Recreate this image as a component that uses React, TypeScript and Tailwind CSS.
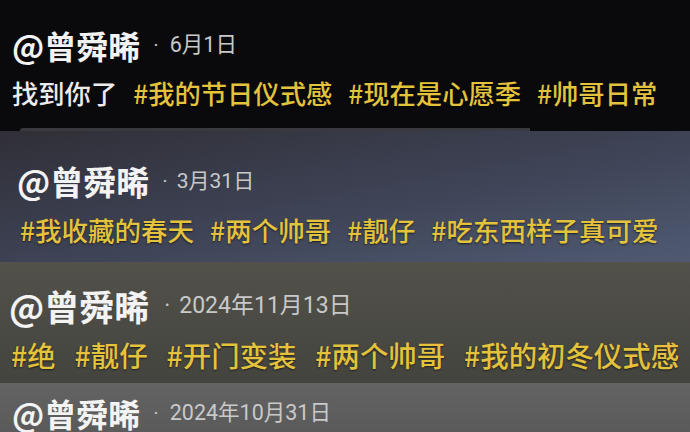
import * as React from "react"

const CJK = "font-['Noto_Sans_CJK_SC','Noto_Sans',sans-serif]"
const DATE = "font-['Roboto','Noto_Sans_CJK_SC',sans-serif]"

type Size = "sm" | "md" | "lg"

const nameSize: Record<Size, string> = {
  sm: "text-[32px]",
  md: "text-[33px]",
  lg: "text-[35px]",
}

const tagSize: Record<Size, string> = {
  sm: "h-[32px] text-[26.3px] gap-[16px]",
  md: "h-[32px] text-[26.5px] gap-[16px]",
  lg: "h-[34px] text-[28.4px] gap-[19px]",
}

function NameRow({ date, size = "sm", pl }: { date: string; size?: Size; pl: string }) {
  const big = size === "lg"
  return (
    <div className={`flex items-center ${pl} ${big ? "h-[42px]" : "h-[40px]"}`}>
      <span className={`${CJK} font-bold text-[#f3f3f3] ${nameSize[size]} leading-none`}>@曾舜晞</span>
      <span className={`${DATE} text-[#c4c4c4] ${big ? "text-[23px] ml-[15px]" : "text-[21px] ml-[13px]"} leading-none`}>
        ·
      </span>
      <span
        className={`${DATE} text-[#c9c9c9] ${
          big ? "text-[23px] ml-[9px]" : size === "md" ? "text-[21px] ml-[9px]" : "text-[21.5px] ml-[11px]"
        } leading-none`}
      >
        {date}
      </span>
    </div>
  )
}

function TagRow({ lead, tags, size = "sm", pl }: { lead?: string; tags: string[]; size?: Size; pl: string }) {
  return (
    <div className={`flex items-center ${pl} ${tagSize[size]} ${CJK} font-medium leading-none whitespace-nowrap`}>
      {lead && <span className="text-[#ececec]">{lead}</span>}
      {tags.map((t) => (
        <span key={t} className="text-[#e3c23c] [text-shadow:0_1px_2px_rgba(0,0,0,0.6)]">
          #{t}
        </span>
      ))}
    </div>
  )
}

export default function App() {
  return (
    <div className="w-[690px] h-[432px] overflow-hidden flex flex-col bg-black">
      {/* strip 1 */}
      <div className="h-[128px] shrink-0 bg-[#0a0a0d] pt-[25px] flex flex-col gap-[12px]">
        <NameRow date="6月1日" pl="pl-[12px]" />
        <TagRow lead="找到你了" tags={["我的节日仪式感", "现在是心愿季", "帅哥日常"]} pl="pl-[12px]" />
      </div>

      {/* lip of the next card */}
      <div className="h-[3px] shrink-0 bg-[#0a0a0d] flex">
        <div className="ml-[20px] w-[510px] bg-[#3a3940] rounded-tl-[3px]" />
      </div>

      {/* strip 2 */}
      <div className="h-[131px] shrink-0 bg-linear-to-br from-[#302f37] via-[#3d4254] to-[#4f5a72] pt-[30px] flex flex-col gap-[13px]">
        <NameRow size="md" date="3月31日" pl="pl-[17px]" />
        <TagRow size="md" tags={["我收藏的春天", "两个帅哥", "靓仔", "吃东西样子真可爱"]} pl="pl-[20px]" />
      </div>

      {/* strip 3 */}
      <div className="h-[121px] shrink-0 bg-linear-to-b from-[#52514a] to-[#44443f] pt-[22px] flex flex-col gap-[12px]">
        <NameRow size="lg" date="2024年11月13日" pl="pl-[9px]" />
        <TagRow size="lg" tags={["绝", "靓仔", "开门变装", "两个帅哥", "我的初冬仪式感"]} pl="pl-[11px]" />
      </div>

      {/* strip 4 */}
      <div className="flex-1 bg-linear-to-b from-[#636363] to-[#5a5a5a] pt-[10px]">
        <NameRow date="2024年10月31日" pl="pl-[12px]" />
      </div>
    </div>
  )
}
